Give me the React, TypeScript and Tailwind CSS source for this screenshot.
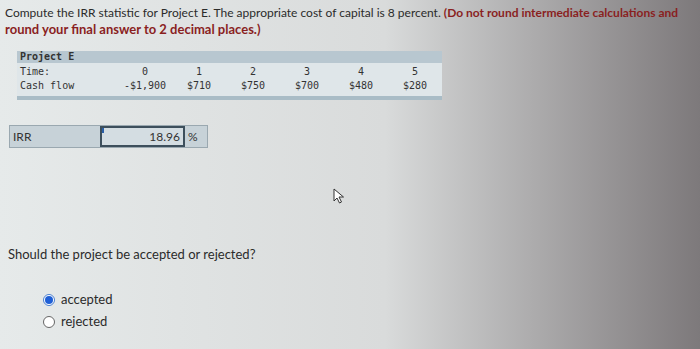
import React from 'react';

const periods = [
  { t: '0', cf: '-$1,900' },
  { t: '1', cf: '$710' },
  { t: '2', cf: '$750' },
  { t: '3', cf: '$700' },
  { t: '4', cf: '$480' },
  { t: '5', cf: '$280' },
];

const mono = { fontFamily: '"DejaVu Sans Mono", "Liberation Mono", monospace' };

export default function App() {
  return (
    <div
      className="relative w-[700px] h-[349px] overflow-hidden bg-linear-to-r from-[#e6eaea] via-[#d9dbdb] via-55% to-[#7d797b] text-[#2b2b2b]"
      style={{ fontFamily: 'Lato, "Open Sans", sans-serif' }}
    >
      {/* question text */}
      <div className="pt-[4px] pl-[5px] text-[12px] leading-[17px] whitespace-nowrap">
        <div>
          Compute the IRR statistic for Project E. The appropriate cost of capital is 8 percent.{' '}
          <span className="font-bold text-[#8a1f1f] text-[12px]">(Do not round intermediate calculations and</span>
        </div>
        <div className="font-bold text-[13px] text-[#8a1f1f]">round your final answer to 2 decimal places.)</div>
      </div>

      {/* cash flow table */}
      <div className="ml-[17px] mt-[13px] w-[425px] bg-[#dfe6e9] text-[10px] text-[#333]" style={mono}>
        <div className="h-[12px] bg-[#b8c7d0] pl-[3px] leading-[12px] font-semibold">Project E</div>
        <div className="flex pl-[3px] pt-[2px] leading-[14px]">
          <div className="w-[101px]">
            <div>Time:</div>
            <div>Cash flow</div>
          </div>
          <div className="flex">
            {periods.map((p) => (
              <div key={p.t} className="w-[54px] text-center">
                <div>{p.t}</div>
                <div>{p.cf}</div>
              </div>
            ))}
          </div>
        </div>
        <div className="h-[4px] mt-[3px] bg-[#a9bcc6]" />
      </div>

      {/* IRR answer row */}
      <div className="ml-[9px] mt-[25px] flex h-[23px] w-[199px] border border-[#9aa8b0] bg-[#c7d2d8] text-[12px] text-[#333]">
        <div className="w-[90px] pl-[3px] leading-[21px]">IRR</div>
        <div className="relative w-[85px] border-2 border-[#3d4f5c] bg-[#d4dde2] pr-[3px] text-right leading-[17px]">
          18.96
          <span className="absolute left-0 top-0 h-[5px] w-[2px] bg-[#2a5fa8]" />
        </div>
        <div className="flex-1 pl-[3px] leading-[21px]">%</div>
      </div>

      {/* follow-up question */}
      <div className="ml-[8px] mt-[98px] text-[13px] leading-[17px]">Should the project be accepted or rejected?</div>

      <div className="ml-[43px] mt-[28px] flex flex-col gap-[5px] text-[13px] leading-[17px]">
        <label className="flex items-center gap-[6px]">
          <span className="flex h-[12px] w-[12px] items-center justify-center rounded-full border border-[#4a7fd0] bg-white">
            <span className="h-[8px] w-[8px] rounded-full bg-[#1f5fd6]" />
          </span>
          accepted
        </label>
        <label className="flex items-center gap-[6px]">
          <span className="h-[12px] w-[12px] rounded-full border border-[#666] bg-white" />
          rejected
        </label>
      </div>

      {/* mouse cursor */}
      <svg className="absolute left-[333px] top-[188px]" width="12" height="16" viewBox="0 0 12 16">
        <path d="M1 1 L1 13 L4 10 L6.5 15 L8.5 14 L6 9 L10.5 9 Z" fill="#fff" stroke="#333" strokeWidth="1" strokeLinejoin="round" />
      </svg>
    </div>
  );
}
